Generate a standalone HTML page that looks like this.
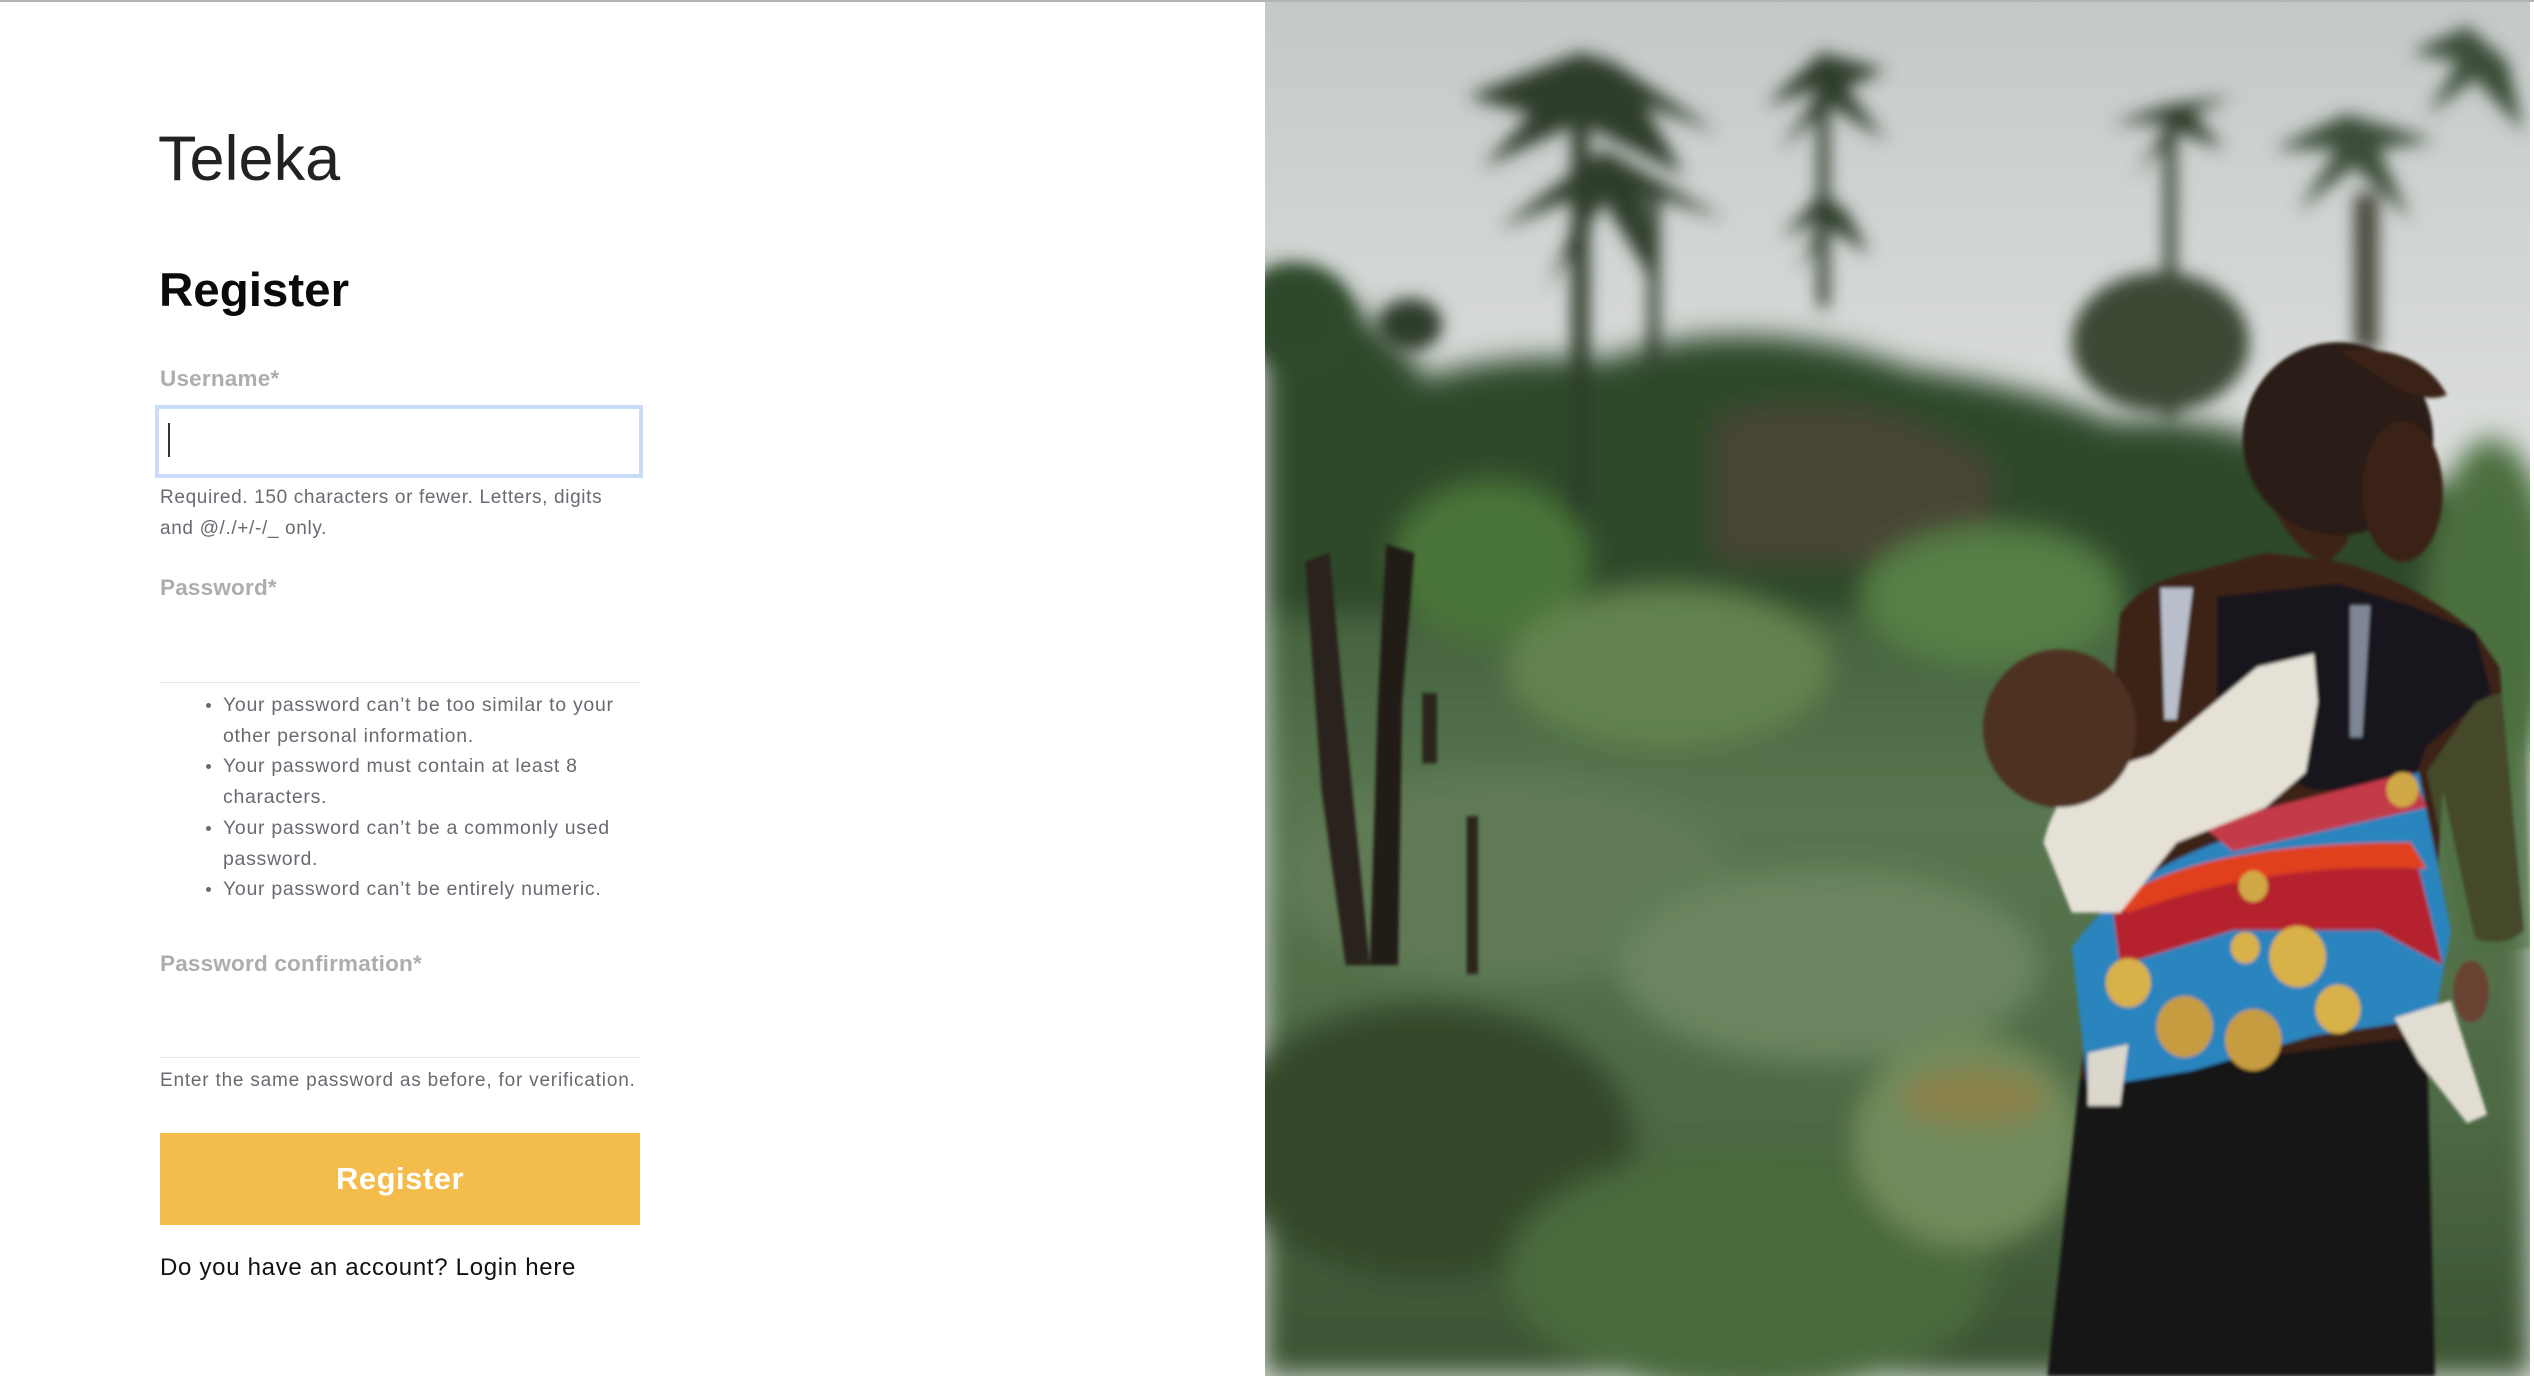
<!DOCTYPE html>
<html><head><meta charset="utf-8">
<style>
*{margin:0;padding:0;box-sizing:border-box}
html,body{width:2534px;height:1376px;overflow:hidden;background:#fff;font-family:"Liberation Sans",sans-serif}
.a{position:absolute;white-space:nowrap}
.lbl{font-size:22.5px;font-weight:bold;color:#adadad;line-height:30px;left:160px;letter-spacing:0.2px}
.help{font-size:19px;color:#676b71;line-height:31px;left:160px;letter-spacing:0.65px}
.hr{position:absolute;left:160px;width:480px;height:1px;background:#e6e6e6}
ul.b{position:absolute;left:160px;top:690px;width:500px;list-style:none;font-size:19.5px;color:#676b71;line-height:30.7px;letter-spacing:0.7px;white-space:nowrap}
ul.b li{position:relative;padding-left:63px}
ul.b li:before{content:"";position:absolute;left:46px;top:13px;width:5px;height:5px;border-radius:50%;background:#676b71}
</style></head><body>
<div style="position:absolute;left:0;top:0;width:2534px;height:2px;background:#b3b3b6;z-index:5"></div>

<div class="a" style="left:158px;top:123px;font-size:63px;line-height:72px;color:#222">Teleka</div>
<div class="a" style="left:159px;top:263px;font-size:47.5px;font-weight:bold;line-height:56px;color:#0a0a0a">Register</div>
<div class="a lbl" style="top:364px">Username*</div>
<div style="position:absolute;left:155px;top:405px;width:488px;height:73px;border:4px solid #c9dbf7;background:#fff"></div>
<div style="position:absolute;left:168px;top:423px;width:2px;height:34px;background:#333"></div>
<div class="a help" style="top:482px">Required. 150 characters or fewer. Letters, digits<br>and @/./+/-/_ only.</div>
<div class="a lbl" style="top:573px">Password*</div>
<div class="hr" style="top:682px"></div>
<ul class="b">
<li>Your password can’t be too similar to your<br>other personal information.</li>
<li>Your password must contain at least 8<br>characters.</li>
<li>Your password can’t be a commonly used<br>password.</li>
<li>Your password can’t be entirely numeric.</li>
</ul>
<div class="a lbl" style="top:949px">Password confirmation*</div>
<div class="hr" style="top:1057px"></div>
<div class="a help" style="top:1065px;letter-spacing:0.8px">Enter the same password as before, for verification.</div>
<div style="position:absolute;left:160px;top:1133px;width:480px;height:92px;background:#f4bd4b;color:#fff;font-weight:bold;font-size:31px;line-height:92px;text-align:center;letter-spacing:0.5px">Register</div>
<div class="a" style="left:160px;top:1253px;font-size:24px;line-height:30px;color:#111;letter-spacing:0.7px">Do you have an account? Login here</div>

<svg style="position:absolute;left:1265px;top:0" width="1265" height="1376" viewBox="0 0 1568 1568" preserveAspectRatio="none">
<defs>
<linearGradient id="sky" x1="0" y1="0" x2="0" y2="1"><stop offset="0" stop-color="#c4c9c8"/><stop offset=".3" stop-color="#d9dcda"/><stop offset="1" stop-color="#dde1de"/></linearGradient>
<linearGradient id="grd" x1="0" y1="0" x2="0" y2="1"><stop offset="0" stop-color="#3a5834"/><stop offset=".35" stop-color="#587650"/><stop offset=".7" stop-color="#4d6944"/><stop offset="1" stop-color="#3a5231"/></linearGradient>
<filter id="bl" x="-20%" y="-20%" width="140%" height="140%"><feGaussianBlur stdDeviation="16"/></filter>
<filter id="bl2" x="-20%" y="-20%" width="140%" height="140%"><feGaussianBlur stdDeviation="10"/></filter>
<filter id="bl3"><feGaussianBlur stdDeviation="2"/></filter>
</defs>
<rect width="1568" height="1568" fill="url(#sky)"/>
<g filter="url(#bl)">
<rect x="0" y="580" width="1568" height="988" fill="url(#grd)"/>
<path d="M0 310 Q120 330 200 430 Q300 400 420 410 Q600 350 800 420 Q950 440 1050 480 Q1200 470 1300 530 L1568 570 L1568 700 L0 700Z" fill="#2f4a2b"/>
<path d="M560 480 Q740 430 900 530 L900 640 L560 640Z" fill="#4a4434"/>
<ellipse cx="280" cy="640" rx="120" ry="90" fill="#4a7439"/>
<ellipse cx="900" cy="680" rx="160" ry="80" fill="#557f45"/>
<ellipse cx="500" cy="760" rx="200" ry="90" fill="#62834e"/>
<ellipse cx="300" cy="1000" rx="280" ry="120" fill="#5f7a55"/>
<ellipse cx="700" cy="1100" rx="260" ry="110" fill="#6a855e"/>
<ellipse cx="200" cy="1300" rx="260" ry="160" fill="#34482a"/>
<ellipse cx="600" cy="1450" rx="300" ry="140" fill="#4a6b3e"/>
<ellipse cx="870" cy="1300" rx="140" ry="120" fill="#728b5b"/>
<ellipse cx="880" cy="1250" rx="90" ry="30" fill="#9c7a3a" opacity=".6"/>
<ellipse cx="1520" cy="700" rx="80" ry="200" fill="#4c7040"/>
</g>
<g filter="url(#bl2)" fill="#2f3d2b">
<rect x="380" y="120" width="22" height="460"/>
<path d="M390 60 L250 110 L330 130 L270 190 L390 140 L520 200 L470 120 L560 150 L430 70Z"/>
<path d="M420 170 L290 260 L400 220 L350 330 L420 230 L480 320 L470 220 L570 250Z"/>
<rect x="475" y="220" width="14" height="200"/>
<rect x="685" y="100" width="14" height="250"/>
<path d="M690 60 L620 120 L690 100 L640 170 L700 120 L770 160 L720 100 L770 80Z"/>
<path d="M690 220 L640 270 L690 250 L660 310 L700 260 L750 290 L720 240Z"/>
<rect x="1115" y="150" width="14" height="330"/>
<path d="M1120 120 L1050 140 L1120 140 L1080 200 L1130 150 L1190 170 L1150 130 L1200 110Z"/>
<ellipse cx="1110" cy="390" rx="110" ry="80" fill="#3a4a36"/>
<path d="M1340 130 L1250 170 L1330 170 L1280 240 L1350 190 L1420 250 L1380 170 L1450 160Z" fill="#3b4d37"/>
<rect x="1350" y="220" width="30" height="180" fill="#4a4a3c"/>
<path d="M1490 30 L1420 60 L1480 70 L1440 130 L1500 90 L1560 150 L1540 70Z" fill="#3b4d37"/>
<ellipse cx="180" cy="370" rx="40" ry="30"/>
<ellipse cx="40" cy="360" rx="70" ry="60" fill="#2f4a2b"/>
</g>
<g filter="url(#bl3)">
<path d="M50 640 L80 630 L95 780 L130 1100 L100 1100 L70 900Z" fill="#2a231c"/>
<path d="M150 620 L185 630 L170 800 L165 1100 L130 1100 L140 800Z" fill="#221d18"/>
<rect x="195" y="790" width="18" height="80" fill="#2a251f"/>
<rect x="250" y="930" width="14" height="180" fill="#2a251f"/>
</g>
<g filter="url(#bl3)">
<path d="M1060 700 Q1090 660 1160 650 L1240 630 L1330 640 Q1420 660 1500 720 L1530 760 L1560 1060 Q1540 1080 1500 1070 L1460 900 L1440 1180 L1450 1568 L970 1568 L1010 1230 L1040 1000 L1050 800Z" fill="#3d2419"/>
<path d="M1180 680 L1330 665 L1420 690 L1500 720 L1520 790 L1440 850 L1420 900 L1300 900 L1180 860Z" fill="#17161a"/>
<path d="M1110 670 L1150 670 L1130 820 L1115 820Z" fill="#b9bfca"/>
<path d="M1345 690 L1370 690 L1360 840 L1345 840Z" fill="#7f8797"/>
<path d="M1240 560 Q1280 640 1320 640 L1340 620 L1360 560Z" fill="#3d2419"/>
<ellipse cx="1330" cy="500" rx="118" ry="110" fill="#2c1a12"/>
<path d="M1330 400 Q1430 390 1465 450 Q1440 460 1400 440Z" fill="#3a2217"/>
<ellipse cx="1410" cy="560" rx="50" ry="80" fill="#3a2218"/>
<path d="M1010 1230 L1440 1180 L1450 1568 L970 1568Z" fill="#131418"/>
<path d="M1000 1080 Q1060 1000 1180 960 L1430 880 L1470 1060 L1450 1160 L1300 1180 L1150 1220 L1020 1240Z" fill="#2b84bd"/>
<path d="M1050 1030 Q1200 960 1430 990 L1460 1100 L1380 1060 L1200 1060 L1060 1100Z" fill="#b5202f"/>
<path d="M1050 1030 Q1150 960 1420 960 L1440 990 Q1250 980 1070 1040Z" fill="#e0401f"/>
<path d="M1160 940 L1420 880 L1440 920 L1200 970Z" fill="#c33a4a"/>
<circle cx="1280" cy="1090" r="35" fill="#d8b14a"/>
<circle cx="1330" cy="1150" r="28" fill="#d8b14a"/>
<circle cx="1140" cy="1170" r="35" fill="#c79b3f"/>
<circle cx="1225" cy="1185" r="35" fill="#c79b3f"/>
<circle cx="1070" cy="1120" r="28" fill="#d8b14a"/>
<circle cx="1215" cy="1080" r="18" fill="#d8b14a"/>
<circle cx="1225" cy="1010" r="18" fill="#d0a844"/>
<circle cx="1410" cy="900" r="20" fill="#d0a844"/>
<path d="M965 960 Q980 900 1030 880 L1100 860 L1230 760 L1300 745 L1305 800 L1290 880 L1240 920 L1130 960 L1060 1040 L1000 1040Z" fill="#e6e1d6"/>
<ellipse cx="985" cy="830" rx="95" ry="90" fill="#4e3023"/>
<path d="M1400 1160 L1470 1140 L1515 1270 L1490 1280 L1430 1210Z" fill="#e2ddd2"/>
<path d="M1020 1200 L1070 1190 L1060 1260 L1020 1260Z" fill="#dcd7cc"/>
<ellipse cx="1495" cy="1130" rx="22" ry="35" fill="#6a4232"/>
<path d="M1440 880 L1500 800 L1560 780 L1568 1080 L1490 1090 Z" fill="#4c6e3c" opacity=".5"/>
</g>
</svg>
</body></html>
